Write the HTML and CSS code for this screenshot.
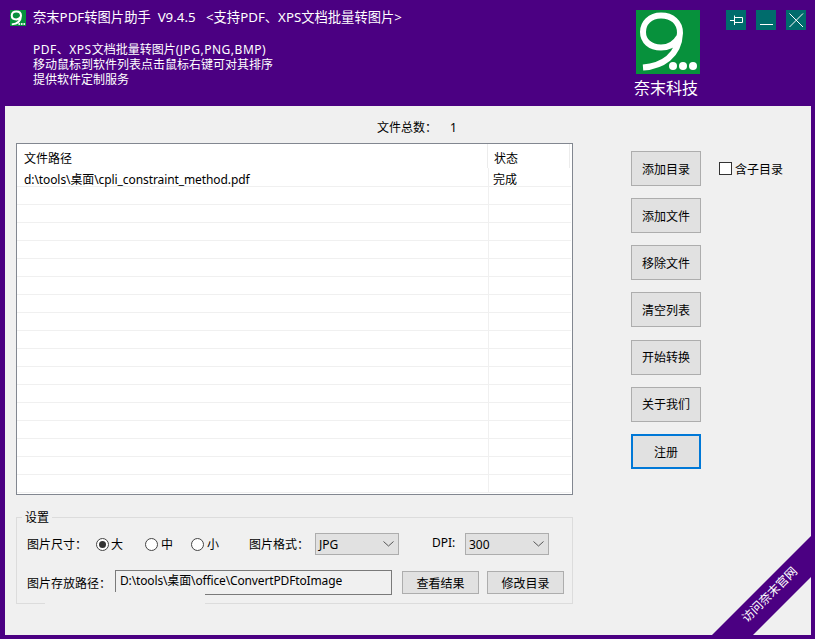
FILE: index.html
```html
<!DOCTYPE html>
<html lang="zh">
<head>
<meta charset="utf-8">
<title>奈末PDF转图片助手</title>
<link rel="stylesheet" href="styles.css">
</head>
<body>
<div class="window">
  <header class="header">
    <div class="intro">
      <div class="titlebar">
        <svg class="appicon" width="16" height="16" viewBox="0 0 64 64"><rect width="64" height="64" fill="#07913c"/><path d="M7 57.500 C26 56 43 46 44 23 C44 12 36 5.500 25 5.500 C14 5.500 7 13 7 22 C7 31 14 37.500 25 37.500 C33 37.500 39 34 43 27" fill="none" stroke="#fff" stroke-width="8"/><circle cx="37" cy="56" r="4" fill="#fff"/><circle cx="47" cy="56" r="4" fill="#fff"/><circle cx="57" cy="56" r="4" fill="#fff"/></svg>
        <span class="title">奈末PDF转图片助手&nbsp; V9.4.5&nbsp;&nbsp; &lt;支持PDF、XPS文档批量转图片&gt;</span>
      </div>
      <p class="desc"><span class="wide">PDF、XPS</span>文档批量转图片<span class="wide">(JPG,PNG,BMP)</span><br>移动鼠标到软件列表点击鼠标右键可对其排序<br>提供软件定制服务</p>
    </div>
    <div class="brand">
      <svg class="logo" width="64" height="64" viewBox="0 0 64 64"><rect width="64" height="64" fill="#07913c"/><path d="M7 57.500 C26 56 43 46 44 23 C44 12 36 5.500 25 5.500 C14 5.500 7 13 7 22 C7 31 14 37.500 25 37.500 C33 37.500 39 34 43 27" fill="none" stroke="#fff" stroke-width="6"/><circle cx="37" cy="56" r="4" fill="#fff"/><circle cx="47" cy="56" r="4" fill="#fff"/><circle cx="57" cy="56" r="4" fill="#fff"/></svg>
      <div class="brandname">奈末科技</div>
    </div>
    <div class="winbtns">
      <div class="winbtn"><svg width="20" height="20" viewBox="0 0 20 20" fill="none" stroke="#fff"><path d="M4 10.500H8.500M8.500 5.500V15M8.500 7.500H16.500V12.500H8.500"/></svg></div>
      <div class="winbtn"><svg width="20" height="20" viewBox="0 0 20 20" fill="none" stroke="#fff"><path d="M4 14.500H17"/></svg></div>
      <div class="winbtn"><svg width="20" height="20" viewBox="0 0 20 20" fill="none" stroke="#fff"><path d="M3.500 3.500L17 17M17 3.500L3.500 17"/></svg></div>
    </div>
  </header>
  <main class="panel">
    <div class="leftcol">
      <div class="count"><span>文件总数：</span><span class="countval">1</span></div>
      <div class="list">
        <div class="listhead">
          <div class="cellpath">文件路径</div>
          <div class="cellstate">状态</div>
        </div>
        <div class="row first"><div class="cellpath"><span class="narrow">d:\tools\桌面\cpli_constraint_method.pdf</span></div><div class="cellstate">完成</div></div>
        <div class="row"><div class="cellpath"></div><div class="cellstate"></div></div>
        <div class="row"><div class="cellpath"></div><div class="cellstate"></div></div>
        <div class="row"><div class="cellpath"></div><div class="cellstate"></div></div>
        <div class="row"><div class="cellpath"></div><div class="cellstate"></div></div>
        <div class="row"><div class="cellpath"></div><div class="cellstate"></div></div>
        <div class="row"><div class="cellpath"></div><div class="cellstate"></div></div>
        <div class="row"><div class="cellpath"></div><div class="cellstate"></div></div>
        <div class="row"><div class="cellpath"></div><div class="cellstate"></div></div>
        <div class="row"><div class="cellpath"></div><div class="cellstate"></div></div>
        <div class="row"><div class="cellpath"></div><div class="cellstate"></div></div>
        <div class="row"><div class="cellpath"></div><div class="cellstate"></div></div>
        <div class="row"><div class="cellpath"></div><div class="cellstate"></div></div>
        <div class="row"><div class="cellpath"></div><div class="cellstate"></div></div>
        <div class="row"><div class="cellpath"></div><div class="cellstate"></div></div>
        <div class="row"><div class="cellpath"></div><div class="cellstate"></div></div>
        <div class="row"><div class="cellpath"></div><div class="cellstate"></div></div>
        <div class="row"><div class="cellpath"></div><div class="cellstate"></div></div>
      </div>
      <section class="settings">
        <div class="legend">设置</div>
        <div class="setrow1">
          <span class="lbl sizelbl">图片尺寸：</span>
          <span class="radio big"><i class="dot on"></i>大</span>
          <span class="radio mid"><i class="dot gap"></i>中</span>
          <span class="radio small"><i class="dot gap"></i>小</span>
          <span class="lbl fmtlbl">图片格式：</span>
          <div class="select fmtsel"><span>JPG</span><svg width="11" height="6" viewBox="0 0 11 6" fill="none" stroke="#555"><path d="M.5 .5L5.500 5L10.500 .5"/></svg></div>
          <span class="lbl dpilbl">DPI:</span>
          <div class="select"><span>300</span><svg width="11" height="6" viewBox="0 0 11 6" fill="none" stroke="#555"><path d="M.5 .5L5.500 5L10.500 .5"/></svg></div>
        </div>
        <div class="setrow2">
          <span class="lbl pathlbl">图片存放路径：</span>
          <div class="pathbox"><span class="narrow2">D:\tools\桌面\office\ConvertPDFtoImage</span></div>
          <button class="btn smallbtn">查看结果</button>
          <button class="btn smallbtn">修改目录</button>
        </div>
        <div class="patch"></div>
      </section>
    </div>
    <div class="btncol">
      <div class="btnline">
        <button class="btn">添加目录</button>
        <label class="check"><i class="box"></i><span class="checktext">含子目录</span></label>
      </div>
      <button class="btn">添加文件</button>
      <button class="btn">移除文件</button>
      <button class="btn">清空列表</button>
      <button class="btn">开始转换</button>
      <button class="btn">关于我们</button>
      <button class="btn focus">注册</button>
    </div>
    <div class="ribbon"><span>访问奈末官网</span></div>
  </main>
</div>
</body>
</html>
```
FILE: styles.css
```css
* { box-sizing: border-box; }
html, body { margin: 0; padding: 0; }
body {
  width: 815px;
  height: 639px;
  overflow: hidden;
  font-family: "Noto Sans", "Noto Sans CJK SC", sans-serif;
  font-size: 12px;
  color: #000;
}
.window {
  width: 815px;
  height: 639px;
  background: #4b0082;
  display: flex;
  flex-direction: column;
  padding: 0 4px 4px 5px;
}
.header {
  height: 106px;
  margin-left: -5px;
  margin-right: -4px;
  display: flex;
  color: #fff;
  flex: none;
}
.intro { width: 636px; padding: 10px 0 0 10px; }
.titlebar { display: flex; align-items: center; height: 16px; }
.appicon { flex: none; }
.title { margin: 0 0 2px 7px; font-size: 13.3px; line-height: 16px; white-space: nowrap; }
.desc { margin: 16px 0 0 23px; font-size: 12px; line-height: 15px; }
.wide { letter-spacing: .5px; }
.narrow { letter-spacing: -.09px; }
.narrow2 { letter-spacing: -.14px; }
.brand { width: 90px; padding-top: 10px; }
.logo { display: block; }
.brandname { width: 64px; margin: 4px 0 0 -2px; font-size: 16px; line-height: 20px; white-space: nowrap; }
.winbtns { display: flex; gap: 10px; padding-top: 10px; }
.winbtn { width: 20px; height: 20px; background: #006c6c; }
.winbtn svg { display: block; }
.panel {
  flex: 1;
  background: #f0f0f0;
  position: relative;
  display: flex;
  overflow: hidden;
}
.leftcol { width: 568px; padding-left: 11px; flex: none; }
.count { height: 37px; padding: 14px 0 0 361px; line-height: 16px; display: flex; }
.countval { margin-left: 13px; }
.list {
  width: 557px;
  height: 352px;
  border: 1px solid #828790;
  background: #fff;
  overflow: hidden;
}
.listhead { display: flex; height: 24px; }
.listhead .cellpath, .listhead .cellstate { padding-top: 7px; line-height: 16px; }
.listhead .cellpath { width: 471px; border-right: 1px solid #ececec; }
.listhead .cellstate { width: 82px; padding-left: 6px; border-right: 1px solid #ececec; }
.cellpath { width: 472px; padding-left: 7px; white-space: nowrap; }
.cellstate { width: 82px; padding-left: 4px; }
.row { display: flex; height: 18px; border-bottom: 1px solid #f0f0f0; width: 554px; }
.row .cellpath { border-right: 1px solid #f0f0f0; }
.row.first { height: 19px; }
.row.first .cellpath, .row.first .cellstate { line-height: 16px; padding-top: 4px; }
.settings {
  position: relative;
  width: 557px;
  height: 87px;
  margin-top: 22px;
  border: 1px solid #dcdcdc;
}
.legend {
  position: absolute;
  left: 5px;
  top: -7px;
  padding: 0 3px;
  background: #f0f0f0;
  line-height: 14px;
}
.setrow1 { display: flex; align-items: center; height: 22px; margin-top: 15px; }
.lbl { white-space: nowrap; }
.sizelbl { margin-left: 10px; width: 69px; }
.radio { display: flex; align-items: center; white-space: nowrap; }
.big { width: 49px; }
.mid { width: 46px; }
.small { width: 58px; }
.dot {
  width: 13px;
  height: 13px;
  border: 1px solid #444;
  border-radius: 50%;
  background: #fff;
  margin-right: 2px;
  display: block;
  position: relative;
}
.dot.gap { margin-right: 3px; }
.dot.on::after {
  content: "";
  position: absolute;
  left: 2px;
  top: 2px;
  width: 7px;
  height: 7px;
  border-radius: 50%;
  background: #333;
}
.fmtlbl { width: 66px; }
.select {
  width: 84px;
  height: 22px;
  background: #e1e1e1;
  border: 1px solid #adadad;
  display: flex;
  justify-content: space-between;
  align-items: center;
  padding: 0 3px;
}
.select svg { margin-right: 1px; }
.fmtsel { margin-right: 33px; }
.dpilbl { width: 33px; margin-top: -3px; }
.setrow2 { display: flex; align-items: center; height: 25px; margin-top: 15px; }
.pathlbl { margin-left: 10px; width: 88px; }
.pathbox {
  width: 277px;
  height: 25px;
  border: 1px solid #7a7a7a;
  background: #f0f0f0;
  padding: 2px 0 0 4px;
  line-height: 16px;
  white-space: nowrap;
  margin-right: 10px;
}
.patch {
  position: absolute;
  left: 28px;
  top: 74px;
  width: 160px;
  height: 16px;
  background: #f0f0f0;
}
.btn {
  width: 70px;
  height: 35px;
  background: #e1e1e1;
  border: 1px solid #adadad;
  font: inherit;
  color: #000;
  padding: 0;
  display: block;
}
.smallbtn { width: 77px; height: 23px; margin-right: 8px; flex: none; }
.btn.focus { border: 2px solid #0078d7; padding-top: 1px; }
.btncol {
  padding: 45px 0 0 58px;
  display: flex;
  flex-direction: column;
  gap: 12.17px;
}
.btnline { display: flex; align-items: center; }
.check { display: flex; align-items: center; margin-left: 18px; white-space: nowrap; }
.checktext { padding-top: 1px; }
.box { display: block; width: 13px; height: 13px; border: 1px solid #333; background: #fff; margin-right: 3px; }
.ribbon {
  position: absolute;
  right: 0;
  bottom: 0;
  width: 99px;
  height: 99px;
  background: #4b0082;
  clip-path: polygon(100% 0, 100% 41px, 41px 100%, 0 100%);
  display: flex;
  align-items: center;
  justify-content: center;
  color: #fff;
}
.ribbon span {
  display: block;
  transform: translate(8px, 8px) rotate(-45deg);
  white-space: nowrap;
}
```
